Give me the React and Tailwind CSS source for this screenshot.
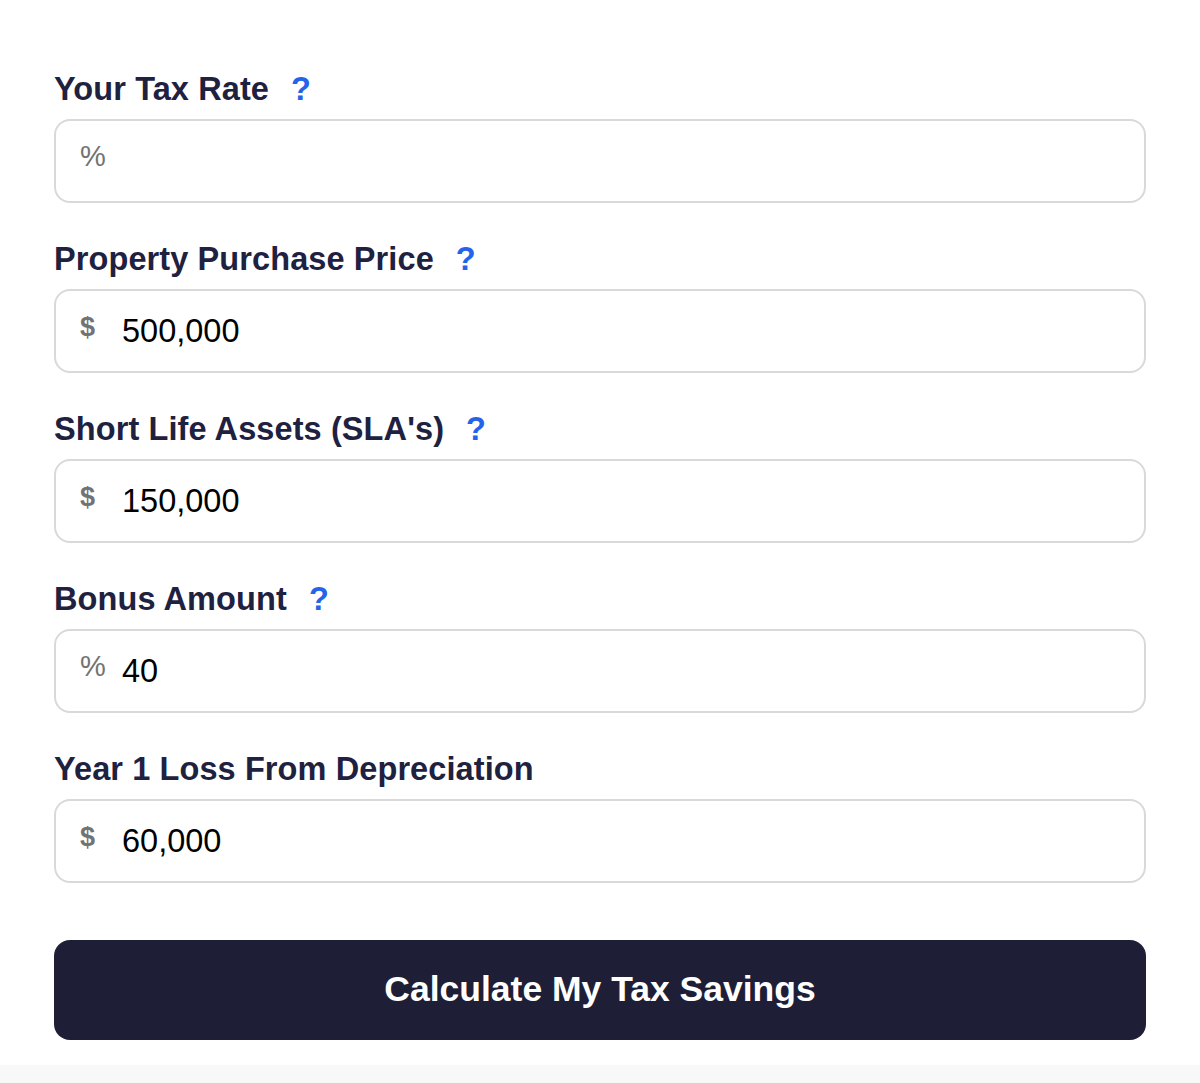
import React, { useState } from 'react';

const fields = [
  { id: 'rate', label: 'Your Tax Rate', help: true, prefix: '%', value: '' },
  { id: 'price', label: 'Property Purchase Price', help: true, prefix: '$', value: '500,000' },
  { id: 'sla', label: "Short Life Assets (SLA's)", help: true, prefix: '$', value: '150,000' },
  { id: 'bonus', label: 'Bonus Amount', help: true, prefix: '%', value: '40' },
  { id: 'loss', label: 'Year 1 Loss From Depreciation', help: false, prefix: '$', value: '60,000' },
];

const Field = ({ field, value, onChange }) => (
  <div className="mb-[36px]">
    <label htmlFor={field.id} className="flex items-center h-[40px] text-[32.5px] font-bold text-[#1f2140] tracking-[0.1px]">
      {field.label}
      {field.help && (
        <span className="ml-[22px] text-[#2563eb] font-bold cursor-pointer">?</span>
      )}
    </label>
    <div className="mt-[10px] h-[84px] flex items-center px-[24px] border-2 border-[#d9d9d9] rounded-[16px] bg-white">
      <span
        className={`w-[42px] shrink-0 mb-[8px] text-[#737373] ${
          field.prefix === '$' ? 'text-[27px] font-bold' : 'text-[29px]'
        }`}
      >
        {field.prefix}
      </span>
      <input
        id={field.id}
        type="text"
        value={value}
        onChange={(e) => onChange(field.id, e.target.value)}
        className="flex-1 min-w-0 bg-transparent outline-none text-[32.5px] text-black"
      />
    </div>
  </div>
);

const App = () => {
  const [values, setValues] = useState(
    Object.fromEntries(fields.map((f) => [f.id, f.value]))
  );

  const handleChange = (id, v) => setValues((prev) => ({ ...prev, [id]: v }));

  return (
    <div className="min-h-screen bg-[#f8f8f8] font-['Liberation_Sans',Arial,sans-serif]">
      <div className="bg-white px-[54px] pt-[69px] pb-[25px]">
        {fields.map((f) => (
          <Field key={f.id} field={f} value={values[f.id]} onChange={handleChange} />
        ))}
        <button
          type="button"
          className="mt-[21px] w-full h-[100px] rounded-[16px] bg-[#1e1f36] text-white text-[35.5px] font-bold"
        >
          Calculate My Tax Savings
        </button>
      </div>
    </div>
  );
};

export default App;
